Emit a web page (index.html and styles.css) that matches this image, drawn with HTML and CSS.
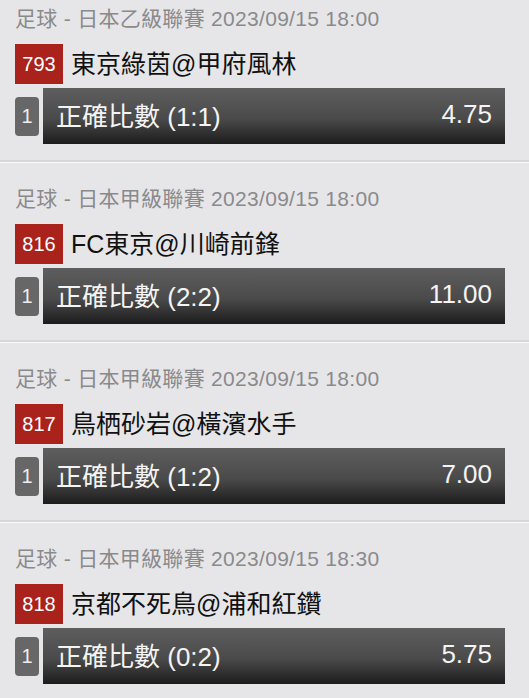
FILE: index.html
```html
<!DOCTYPE html>
<html lang="zh-Hant">
<head>
    <meta charset="UTF-8">
    <meta name="viewport" content="width=device-width, initial-scale=1.0">
    <title>投注單</title>
    <link rel="stylesheet" href="styles.css">
</head>
<body>
    <div class="list">
        <div class="item">
            <div class="league">足球 - 日本乙級聯賽 2023/09/15 18:00</div>
            <div class="match">
                <span class="code">793</span>
                <span class="teams">東京綠茵@甲府風林</span>
            </div>
            <div class="bet">
                <span class="num">1</span>
                <div class="bar">
                    <span class="pick">正確比數 (1:1)</span>
                    <span class="odds">4.75</span>
                </div>
            </div>
        </div>

        <div class="item">
            <div class="league">足球 - 日本甲級聯賽 2023/09/15 18:00</div>
            <div class="match">
                <span class="code">816</span>
                <span class="teams">FC東京@川崎前鋒</span>
            </div>
            <div class="bet">
                <span class="num">1</span>
                <div class="bar">
                    <span class="pick">正確比數 (2:2)</span>
                    <span class="odds">11.00</span>
                </div>
            </div>
        </div>

        <div class="item">
            <div class="league">足球 - 日本甲級聯賽 2023/09/15 18:00</div>
            <div class="match">
                <span class="code">817</span>
                <span class="teams">鳥栖砂岩@橫濱水手</span>
            </div>
            <div class="bet">
                <span class="num">1</span>
                <div class="bar">
                    <span class="pick">正確比數 (1:2)</span>
                    <span class="odds">7.00</span>
                </div>
            </div>
        </div>

        <div class="item">
            <div class="league">足球 - 日本甲級聯賽 2023/09/15 18:30</div>
            <div class="match">
                <span class="code">818</span>
                <span class="teams">京都不死鳥@浦和紅鑽</span>
            </div>
            <div class="bet">
                <span class="num">1</span>
                <div class="bar">
                    <span class="pick">正確比數 (0:2)</span>
                    <span class="odds">5.75</span>
                </div>
            </div>
        </div>
    </div>
</body>
</html>
```

FILE: styles.css
```css
body {
    margin: 0;
    background-color: #e6e6e8;
    font-family: 'Liberation Sans', 'Noto Sans CJK TC', sans-serif;
    overflow: hidden;
}
.item {
    padding: 17px 24px 16px 15px;
    border-bottom: 2px solid #d6d6d8;
    box-shadow: 0 1px 0 #fafafa;
    margin-bottom: 1px;
}
.item:first-child {
    padding-top: 0;
}
.league {
    height: 38px;
    line-height: 38px;
    font-size: 21px;
    letter-spacing: 0.3px;
    color: #8a8a8c;
    white-space: nowrap;
}
.match {
    display: flex;
    align-items: center;
    height: 40px;
    margin-top: 6px;
}
.code {
    width: 48px;
    height: 40px;
    line-height: 40px;
    text-align: center;
    background-color: #a9221b;
    color: #fff;
    font-size: 20px;
}
.teams {
    margin-left: 8px;
    font-size: 25px;
    color: #111;
    margin-top: -5px;
}
.bet {
    display: flex;
    align-items: center;
    gap: 4px;
    margin-top: 4px;
}
.num {
    width: 24px;
    height: 39px;
    line-height: 39px;
    text-align: center;
    background-color: #676767;
    border-radius: 4px;
    color: #eee;
    font-size: 20px;
}
.bar {
    flex: 1;
    height: 56px;
    display: flex;
    align-items: center;
    justify-content: space-between;
    padding: 0 13px 3px;
    box-sizing: border-box;
    background: linear-gradient(#5e5e5e, #4a4a4a 55%, #1c1c1c);
    color: #f4f4f4;
    font-size: 26px;
}
```
